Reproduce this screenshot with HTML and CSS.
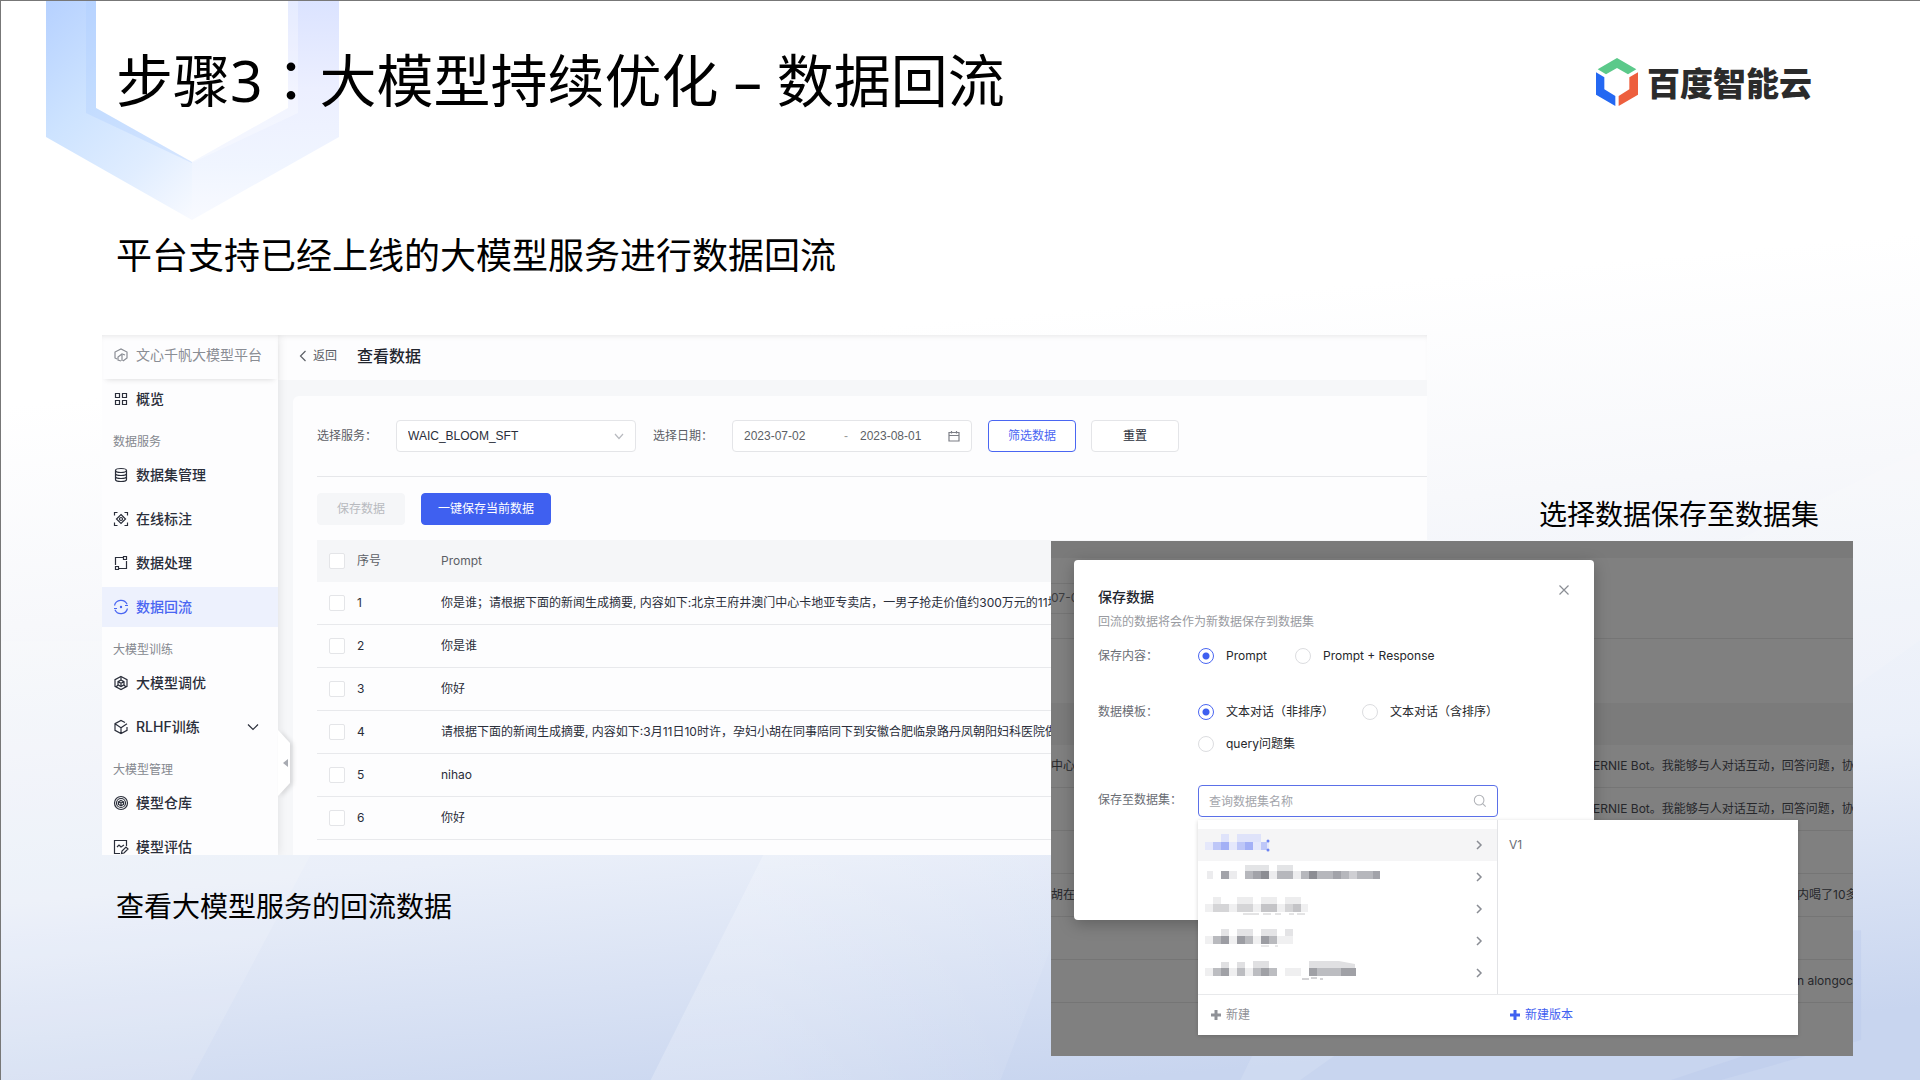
FILE: index.html
```html
<!DOCTYPE html>
<html lang="zh-CN">
<head>
<meta charset="utf-8">
<title>大模型持续优化 – 数据回流</title>
<link rel="stylesheet" href="styles.css">
</head>
<body>
<div class="slide">
  <svg class="backdrop" viewBox="0 0 1920 1080" preserveAspectRatio="none" aria-hidden="true">
    <defs>
      <linearGradient id="sky" x1="0.42" y1="0" x2="0.58" y2="1">
        <stop offset="0.3" stop-color="#fff"/>
        <stop offset="0.5" stop-color="#f7f8fb"/>
        <stop offset="0.75" stop-color="#eaeff9"/>
        <stop offset="1" stop-color="#c8d5ef"/>
      </linearGradient>
      <linearGradient id="ray" x1="0" y1="0" x2="1" y2="0">
        <stop offset="0.2" stop-color="#fff" stop-opacity="0.22"/>
        <stop offset="1" stop-color="#fff" stop-opacity="0"/>
      </linearGradient>
    </defs>
    <rect width="1920" height="1080" fill="url(#sky)"/>
    <path d="M0 640 424 640 190 1080H0Z" fill="#fff" opacity="0.14"/>
    <path d="M860 660 1160 660 1000 1080H650Z" fill="url(#ray)"/>
    <path d="M1430 690 1920 450V640L1300 1080H1240Z" fill="#fff" opacity="0.12"/>
    <path d="M1853 930h8v110l-140 40h-50l180-60Z" fill="#b9c9ea" opacity="0.4"/>
  </svg>
  <svg class="shield" viewBox="0 0 294 220" aria-hidden="true">
    <defs>
      <linearGradient id="shieldLeft" gradientUnits="userSpaceOnUse" x1="0" y1="0" x2="200" y2="200">
        <stop offset="0" stop-color="#b6d1ff"/>
        <stop offset="0.35" stop-color="#cde3ff"/>
        <stop offset="0.65" stop-color="#e0edff"/>
        <stop offset="0.91" stop-color="#f8faff"/>
      </linearGradient>
      <linearGradient id="shieldRight" gradientUnits="userSpaceOnUse" x1="242" y1="0" x2="242" y2="219">
        <stop offset="0" stop-color="#dbe3ff"/>
        <stop offset="0.4" stop-color="#ecefff"/>
        <stop offset="0.75" stop-color="#f0f5ff"/>
        <stop offset="1" stop-color="#f8faff"/>
      </linearGradient>
    </defs>
    <path d="M0 0H50V107L146 161V219L0 136Z" fill="url(#shieldLeft)"/>
    <path d="M242 0H293V136L146 219V161L242 107Z" fill="url(#shieldRight)"/>
    <path d="M40 0H50V107L146 161V162L40 112Z" fill="#a9c9ff" opacity="0.3"/>
    <path d="M242 0H252V112L146 162V161L242 107Z" fill="#fff" opacity="0.3"/>
  </svg>

  <header class="slide-head">
    <h1>步骤3<span class="mid-colon" lang="zh-TW">：</span>大模型持续优化 – 数据回流</h1>
    <div class="logo">
      <svg viewBox="112 82 132 148" width="44" height="50" aria-hidden="true">
        <path d="M178 84 236 118 211 133 178 114 145 133 120 118Z" fill="#5bc98a"/>
        <path d="M115 127 140 142V178L173 198V228L115 194Z" fill="#2468f2"/>
        <path d="M241 127 215 142V178L183 198V228L241 194Z" fill="#ed5f3e"/>
      </svg>
      <span>百度智能云</span>
    </div>
  </header>
  <p class="lead">平台支持已经上线的大模型服务进行数据回流</p>

  <main class="stage">
    <figure class="shot-view">
      <div class="app">
        <nav class="side">
          <div class="brand">
            <svg class="ico" viewBox="0 0 16 16"><path d="M4 12 2 11V5l6-3 6 3v2M8 14l-3-1 0-3 4-3 3 1M10 14l4-3V6M9 8v6"/></svg>
            <span>文心千帆大模型平台</span>
          </div>
          <a class="item" href="#"><svg class="ico" viewBox="0 0 16 16"><path d="M2.500 2.500h4v4h-4zM9.500 2.500h4v4h-4zM2.500 9.500h4v4h-4zM9.500 9.500h4v4h-4z"/></svg>概览</a>
          <div class="group">数据服务</div>
          <a class="item" href="#"><svg class="ico" viewBox="0 0 16 16"><ellipse cx="8" cy="3.500" rx="5.500" ry="2"/><path d="M2.500 3.500v9c0 1.200 2.500 2 5.500 2s5.500-.8 5.500-2v-9M2.500 6.500c0 1.200 2.500 2 5.500 2s5.500-.8 5.500-2M2.500 9.500c0 1.200 2.500 2 5.500 2s5.500-.8 5.500-2"/></svg>数据集管理</a>
          <a class="item" href="#"><svg class="ico" viewBox="0 0 16 16"><path d="M1.500 4.500v-3h3M11.500 1.500h3v3M14.500 11.500v3h-3M4.500 14.500h-3v-3M8 3.500l4.500 4.500L8 12.500 3.500 8z"/><circle cx="8" cy="8" r="1.500"/></svg>在线标注</a>
          <a class="item" href="#"><svg class="ico" viewBox="0 0 16 16"><path d="M2.500 10V2.500H10M13.500 6v7.500H6"/><path d="M10.500 1.500h3v3h-3zM2.500 11.500h3v3h-3z"/></svg>数据处理</a>
          <a class="item active" href="#" aria-current="page"><svg class="ico" viewBox="0 0 16 16"><path d="M1.500 6.500a6.700 6.700 0 0 1 12.600-1.200M14.500 9.500A6.700 6.700 0 0 1 1.900 10.700M1 9.500h3M12 6.500h3"/><circle cx="8" cy="8" r=".6"/></svg>数据回流</a>
          <div class="group">大模型训练</div>
          <a class="item" href="#"><svg class="ico" viewBox="0 0 16 16"><path d="M8 1.500l6 3.200v6.600l-6 3.200-6-3.200V4.700z"/><path d="M8 5l3 1.600v3.200L8 11.500 5 9.800V6.600zM8 8.200V11M5 6.600l3 1.600 3-1.600M8 2v3M3 12l2-2M13 12l-2-2"/></svg>大模型调优</a>
          <a class="item" href="#"><svg class="ico" viewBox="0 0 16 16"><path d="M12 3.500L8 1.500 2 4.700v6.600l6 3.200 6-3.200V8M2 4.700l6 4v5.800M8 8.700l6-4"/></svg>RLHF训练<svg class="ico fold" viewBox="0 0 16 16"><path d="M3 5.500l5 5 5-5"/></svg></a>
          <div class="group">大模型管理</div>
          <a class="item" href="#"><svg class="ico" viewBox="0 0 16 16"><circle cx="8" cy="8" r="6.500"/><circle cx="8" cy="8" r="4.500"/><path d="M8 5.500l2.500 1.300v2.600L8 10.800 5.500 9.400V6.800zM8 8v3M5.500 6.800L8 8l2.500-1.200"/></svg>模型仓库</a>
          <a class="item" href="#"><svg class="ico" viewBox="0 0 16 16"><path d="M13.500 7V1.500h-12v13H7M4 8l2-2 2 2 3-2M8.500 14.500l.5-2.500 4-4 2 2-4 4z"/></svg>模型评估</a>
          <button class="collapse" type="button" aria-label="收起"><svg viewBox="0 0 12 66" width="12" height="66"><path d="M0 0 12 13V53L0 66Z" fill="#fff"/><path d="M10 29v8l-5-4Z" fill="#a8abb2"/></svg></button>
        </nav>
        <section class="work">
          <div class="crumb">
            <a href="#"><svg class="ico" viewBox="0 0 8 12" width="8" height="12"><path d="M6.500 1 1.500 6l5 5"/></svg>返回</a>
            <h2>查看数据</h2>
          </div>
          <div class="card">
            <div class="filters">
              <label for="svc">选择服务：</label>
              <div class="select">
                <select id="svc"><option>WAIC_BLOOM_SFT</option></select>
                <svg class="ico" viewBox="0 0 16 16"><path d="M4 6l4 4.500L12 6"/></svg>
              </div>
              <label for="from">选择日期：</label>
              <div class="range">
                <input id="from" type="text" value="2023-07-02"><span>-</span><input type="text" value="2023-08-01" aria-label="结束日期">
                <svg class="ico" viewBox="0 0 12 12" width="12" height="12"><path d="M1 2.500h10v8.500H1zM1 5.500h10M3.500 1v2.500M8.500 1v2.500"/></svg>
              </div>
              <button class="btn outline" type="button">筛选数据</button>
              <button class="btn plain" type="button">重置</button>
            </div>
            <div class="actions">
              <button class="btn off" type="button" disabled>保存数据</button>
              <button class="btn primary" type="button">一键保存当前数据</button>
            </div>
            <table class="rows">
              <colgroup><col class="c-check"><col class="c-num"><col></colgroup>
              <thead><tr><th><input type="checkbox" aria-label="全选"></th><th>序号</th><th>Prompt</th></tr></thead>
              <tbody>
                <tr><td><input type="checkbox" aria-label="1"></td><td>1</td><td>你是谁；请根据下面的新闻生成摘要, 内容如下:北京王府井澳门中心卡地亚专卖店，一男子抢走价值约300万元的11块</td></tr>
                <tr><td><input type="checkbox" aria-label="2"></td><td>2</td><td>你是谁</td></tr>
                <tr><td><input type="checkbox" aria-label="3"></td><td>3</td><td>你好</td></tr>
                <tr><td><input type="checkbox" aria-label="4"></td><td>4</td><td>请根据下面的新闻生成摘要, 内容如下:3月11日10时许，孕妇小胡在同事陪同下到安徽合肥临泉路丹凤朝阳妇科医院做</td></tr>
                <tr><td><input type="checkbox" aria-label="5"></td><td>5</td><td>nihao</td></tr>
                <tr><td><input type="checkbox" aria-label="6"></td><td>6</td><td>你好</td></tr>
              </tbody>
            </table>
          </div>
        </section>
      </div>
      <figcaption>查看大模型服务的回流数据</figcaption>
    </figure>

    <figure class="shot-save">
      <figcaption>选择数据保存至数据集</figcaption>
      <div class="screen">
        <div class="dim-top"></div>
        <div class="dim-filter"><span>07-0</span></div>
        <div class="dim-gap"></div>
        <table class="dim-rows">
          <colgroup><col class="c-left"><col></colgroup>
          <thead><tr><th></th><th></th></tr></thead>
          <tbody>
            <tr><td>中心</td><td>ERNIE Bot。我能够与人对话互动，回答问题，协</td></tr>
            <tr><td></td><td>ERNIE Bot。我能够与人对话互动，回答问题，协</td></tr>
            <tr><td></td><td></td></tr>
            <tr><td>胡在同</td><td class="tail">内喝了10多</td></tr>
            <tr><td></td><td></td></tr>
            <tr><td></td><td class="tail">n alongoch</td></tr>
          </tbody>
        </table>

        <form class="dialog" role="dialog" aria-labelledby="dlg">
          <button class="close" type="button" aria-label="关闭"><svg class="ico" viewBox="0 0 12 12" width="12" height="12"><path d="M1.500 1.500l9 9M10.500 1.500l-9 9"/></svg></button>
          <h3 id="dlg">保存数据</h3>
          <p>回流的数据将会作为新数据保存到数据集</p>
          <div class="field" role="radiogroup" aria-labelledby="l1">
            <span id="l1">保存内容：</span>
            <div class="opts">
              <label><input type="radio" name="content" checked>Prompt</label>
              <label><input type="radio" name="content">Prompt + Response</label>
            </div>
          </div>
          <div class="field tpl" role="radiogroup" aria-labelledby="l2">
            <span id="l2">数据模板：</span>
            <div class="opts">
              <label><input type="radio" name="tpl" checked>文本对话（非排序）</label>
              <label><input type="radio" name="tpl">文本对话（含排序）</label>
              <label><input type="radio" name="tpl">query问题集</label>
            </div>
          </div>
          <div class="field pick">
            <label for="ds">保存至数据集：</label>
            <div class="combo">
              <input id="ds" type="text" placeholder="查询数据集名称">
              <svg class="ico" viewBox="0 0 16 16"><circle cx="7" cy="7" r="5.500"/><path d="M11 11l3.500 3.500"/></svg>
              <div class="menu">
                <div class="pane">
                  <ul>
                    <li class="on"><svg class="mosaic" viewBox="0 0 180 20"><g fill="#dfe3fa"><path d="M16 1h8v8h-8zM32 1h24v8H32z"/></g><path d="M0 9h64v8H0z" fill="#e5e8fb"/><path d="M8 9h8v8H8zM32 9h8v8h-8zM56 9h6v8h-6z" fill="#bec7f8"/><path d="M16 9h8v8h-8zM40 9h8v8h-8z" fill="#a3b0f6"/><circle cx="63" cy="8" r="1.500" fill="#6c83f2"/><circle cx="63" cy="17" r="1.500" fill="#6c83f2"/></svg><svg class="ico" viewBox="0 0 16 16"><path d="M6 4l4 4-4 4"/></svg></li>
                    <li><svg class="mosaic" viewBox="0 0 180 20"><path d="M40 0h24v6H40zM72 0h16v6H72z" fill="#e3e4e6"/><path d="M2 6h6v8H2zM24 6h8v8h-8zM64 6h8v8h-8zM88 6h8v8h-8z" fill="#ececee"/><path d="M40 6h8v8h-8zM72 6h16v8H72zM96 6h8v8h-8zM112 6h16v8h-16zM136 6h39v8h-39z" fill="#b6b7bc"/><path d="M16 6h8v8h-8zM48 6h8v8h-8zM128 6h8v8h-8zM168 6h7v8h-7z" fill="#a2a3a9"/><path d="M56 6h8v8h-8zM104 6h8v8h-8z" fill="#8c8d93"/><path d="M144 6h8v8h-8z" fill="#cfcfd3"/></svg><svg class="ico" viewBox="0 0 16 16"><path d="M6 4l4 4-4 4"/></svg></li>
                    <li><svg class="mosaic" viewBox="0 0 180 20"><path d="M8 0h8v7H8zM32 0h16v7H32zM56 0h16v7H56zM80 0h16v7H80z" fill="#ededee"/><path d="M0 7h103v8H0z" fill="#f0f0f1"/><path d="M8 7h16v8H8zM32 7h16v8H32zM80 7h8v8h-8z" fill="#d5d5d7"/><path d="M56 7h16v8H56zM88 7h8v8h-8z" fill="#c4c4c7"/><path d="M38 17h16M58 17h8M70 17h6M84 17h5M92 17h8" stroke="#c8c8ca"/></svg><svg class="ico" viewBox="0 0 16 16"><path d="M6 4l4 4-4 4"/></svg></li>
                    <li><svg class="mosaic" viewBox="0 0 180 20"><path d="M16 0h8v7h-8zM32 0h16v7H32zM56 0h16v7H56zM80 0h8v7h-8z" fill="#e4e4e6"/><path d="M0 7h88v8H0z" fill="#f0f0f1"/><path d="M8 7h8v8H8zM40 7h8v8h-8zM64 7h8v8h-8z" fill="#b9babe"/><path d="M16 7h8v8h-8zM32 7h8v8h-8zM56 7h8v8h-8z" fill="#9c9da3"/><path d="M56 17h8M70 17h3" stroke="#d0d0d2"/></svg><svg class="ico" viewBox="0 0 16 16"><path d="M6 4l4 4-4 4"/></svg></li>
                    <li><svg class="mosaic" viewBox="0 0 180 20"><path d="M16 1h8v6h-8zM32 1h8v6h-8zM48 0h16v7H48zM104 0h30l16 3v4h-46z" fill="#e0e0e2"/><path d="M0 7h72v8H0zM80 7h16v8H80z" fill="#efeff0"/><path d="M8 7h8v8H8zM32 7h8v8h-8zM48 7h8v8h-8zM64 7h8v8h-8zM104 7h47v8h-47z" fill="#bcbdc1"/><path d="M16 7h8v8h-8zM56 7h8v8h-8zM104 7h8v8h-8zM136 7h15v8h-15z" fill="#a0a1a6"/><path d="M97 18h7M106 17h6M115 18h3" stroke="#a8a8ac"/></svg><svg class="ico" viewBox="0 0 16 16"><path d="M6 4l4 4-4 4"/></svg></li>
                  </ul>
                  <button class="add" type="button"><svg viewBox="0 0 10 10" width="10" height="10"><path d="M5 0v10M0 5h10"/></svg>新建</button>
                </div>
                <div class="pane">
                  <ul><li class="ver">V1</li></ul>
                  <button class="add blue" type="button"><svg viewBox="0 0 10 10" width="10" height="10"><path d="M5 0v10M0 5h10"/></svg>新建版本</button>
                </div>
              </div>
            </div>
          </div>
        </form>
      </div>
    </figure>
  </main>
</div>
</body>
</html>
```

FILE: styles.css
```css
* { box-sizing: border-box; }

body {
  margin: 0;
  color: #000;
  font-family: "Noto Sans", "Noto Sans CJK SC", sans-serif;
}

h1, h2, h3, p, ul, figure { margin: 0; padding: 0; }
ul { list-style: none; }
a { color: inherit; text-decoration: none; }
button, input, select { font: inherit; color: inherit; margin: 0; }
button { padding: 0; border: 0; background: none; }

.slide {
  position: relative;
  min-height: 100vh;
  border-top: 1px solid #777;
  border-left: 1px solid #777;
  overflow: hidden;
}
.backdrop { position: absolute; inset: 0; width: 100%; height: 100%; z-index: -2; }
.shield { position: absolute; left: 45px; top: 0; width: 294px; z-index: -1; }

.slide-head {
  display: flex;
  justify-content: space-between;
  padding: 40px 108px 0 115px;
}
h1 { font-size: 57px; line-height: 72px; font-weight: 400; }
.mid-colon { font-family: "Noto Sans CJK TC", sans-serif; }
.logo {
  display: flex;
  align-items: center;
  gap: 8px;
  height: 82px;
  color: #2b2b2b;
  font: 900 33px/48px "Noto Sans CJK SC", sans-serif;
}
.lead { margin-top: 109px; padding-left: 115px; font-size: 36px; line-height: 48px; }

.stage {
  display: grid;
  grid-template-columns: 949fr 376fr 426fr;
  align-items: start;
  margin-top: 55px;
  padding: 0 67px 24px 101px;
}
.shot-view { grid-area: 1 / 1 / 2 / 3; }
.shot-save { grid-area: 1 / 2 / 2 / 4; margin-top: 159px; }
figcaption { font-size: 28px; line-height: 40px; }
.shot-view figcaption { margin-top: 31px; padding-left: 14px; }
.shot-save figcaption { margin-bottom: 7px; padding-right: 34px; text-align: right; }

.ico {
  flex: none;
  width: 16px;
  height: 16px;
  fill: none;
  stroke: currentColor;
  stroke-width: 1.2;
}
.ico[width="12"] { width: 12px; height: 12px; }
.ico[width="8"] { width: 8px; height: 12px; }

/* data view */
.app {
  display: flex;
  height: 520px;
  overflow: hidden;
  background: #f6f7f9;
  color: #2a2e3a;
  font: 12px/20px Inter, "Noto Sans CJK SC", sans-serif;
}
.side {
  position: relative;
  flex: none;
  width: 176px;
  background: #fdfdfe;
  box-shadow: 0 0 10px rgba(0, 0, 0, .1);
  z-index: 1;
  font-size: 14px;
}
.brand {
  display: flex;
  align-items: center;
  gap: 7px;
  height: 44px;
  padding: 0 11px 4px;
  color: #8a8d94;
  box-shadow: 0 4px 6px -4px rgba(0, 0, 0, .16), inset 0 4px 6px -4px rgba(0, 0, 0, .12);
}
.item {
  display: flex;
  align-items: center;
  gap: 7px;
  height: 40px;
  padding: 0 17px 0 11px;
  font-weight: 500;
}
.item + .item { margin-top: 4px; }
.item .fold { margin-left: auto; }
.active { background: #edf1fd; color: #4a66f2; }
.group { height: 36px; padding: 8px 11px 0; font-size: 12px; line-height: 30px; color: #85888f; }
.collapse { position: absolute; left: 100%; top: 395px; height: 66px; filter: drop-shadow(3px 1px 2px rgba(0, 0, 0, .12)); }
.collapse svg { display: block; }

.work { flex: 1; min-width: 0; }
.crumb {
  display: flex;
  align-items: center;
  gap: 20px;
  height: 45px;
  padding: 0 21px 3px;
  background: #fdfdfe;
  box-shadow: inset 0 4px 6px -4px rgba(0, 0, 0, .12);
}
.crumb a { display: flex; align-items: center; gap: 6px; color: #5c5f66; }
h2 { font-size: 16px; font-weight: 500; color: #22252e; }
.card {
  margin: 16px 0 0 15px;
  padding: 24px 0 16px 24px;
  border-radius: 6px 0 0 0;
  background: #fdfdfe;
}
.filters {
  display: flex;
  align-items: center;
  height: 57px;
  padding-bottom: 24px;
  border-bottom: 1px solid #e6e7ea;
  color: #5c5f66;
}
.filters > label { width: 79px; }
.select, .range {
  display: flex;
  align-items: center;
  width: 240px;
  height: 32px;
  border: 1px solid #e4e5e8;
  border-radius: 4px;
  background: #fff;
  font-family: "Liberation Sans", sans-serif;
}
.select { position: relative; margin-right: 17px; color: #2a2e3a; }
.select select { appearance: none; width: 100%; height: 30px; padding: 0 11px; border: 0; background: none; }
.select .ico { position: absolute; right: 8px; color: #b8babf; pointer-events: none; }
.range { margin-right: 16px; padding: 0 11px; }
.range input { width: 84px; padding: 0; border: 0; background: none; }
.range span { width: 32px; padding-left: 16px; color: #999; }
.range .ico { margin-left: auto; color: #7c7f86; }
.btn { width: 88px; height: 32px; border: 1px solid #e4e5e8; border-radius: 4px; background: #fff; }
.outline { margin-right: 15px; border-color: #4a66f2; color: #4a66f2; }
.plain { color: #2a2e3a; }
.actions { display: flex; gap: 16px; margin: 16px 0 15px; }
.off { border-color: #f5f6f8; background: #f5f6f8; color: #b8babf; }
.primary { width: 130px; border-color: #3f60f0; background: #3f60f0; color: #fff; }

.rows, .dim-rows { width: 100%; table-layout: fixed; border-spacing: 0; }
.c-check { width: 40px; }
.c-num { width: 84px; }
.rows th, .rows td, .dim-rows th, .dim-rows td {
  padding: 0;
  text-align: left;
  font-weight: 400;
  white-space: nowrap;
  overflow: hidden;
}
.rows th { height: 42px; background: #f5f6f8; color: #5c5f66; }
.rows td { height: 43px; border-bottom: 1px solid #e8e9ec; }
.rows input {
  appearance: none;
  display: block;
  width: 16px;
  height: 16px;
  margin-left: 12px;
  border: 1px solid #e4e5e8;
  border-radius: 2px;
  background: #fff;
}

/* save dialog */
.screen {
  position: relative;
  height: 515px;
  background: #808080;
  color: #26272b;
  font: 12px/20px Inter, "Noto Sans CJK SC", sans-serif;
}
.dim-top { height: 17px; background: #7a7a7a; }
.dim-filter { height: 81px; padding-top: 25px; border-bottom: 1px solid #757575; }
.dim-filter span {
  display: block;
  width: 120px;
  height: 31px;
  border: solid #757575;
  border-width: 1px 0;
  line-height: 28px;
  color: #3c3c3f;
}
.dim-gap { height: 64px; }
.c-left { width: 542px; }
.dim-rows th { height: 42px; background: #7b7b7b; }
.dim-rows td { height: 43px; border-bottom: 1px solid #757575; }
.dim-rows .tail { padding-left: 204px; }

.dialog {
  position: absolute;
  left: 23px;
  top: 19px;
  width: 520px;
  min-height: 360px;
  padding: 24px;
  border-radius: 4px;
  background: #fff;
  box-shadow: 0 4px 16px rgba(0, 0, 0, .25);
}
.close { position: absolute; right: 24px; top: 24px; width: 12px; height: 12px; color: #8a8d94; }
.close svg { display: block; }
h3 { font-size: 14px; line-height: 26px; font-weight: 500; color: #22252e; }
.dialog p { line-height: 24px; color: #999ba1; }
.field { display: flex; margin-top: 10px; line-height: 24px; }
.field > :first-child { flex: none; width: 100px; color: #6a6d74; }
.tpl { margin-top: 32px; }
.pick { margin-top: 29px; }
.pick > label { line-height: 30px; }
.opts { display: flex; flex-wrap: wrap; gap: 8px 28px; }
.opts label { display: flex; align-items: center; gap: 12px; }
.opts input {
  appearance: none;
  width: 16px;
  height: 16px;
  border: 1px solid #dcdde0;
  border-radius: 50%;
  background: #fff;
}
.opts input:checked { border-color: #4a66f2; background: radial-gradient(circle, #3f60f0 0 3px, #fff 4px); }

.combo { position: relative; width: 300px; height: 32px; }
.combo input {
  width: 100%;
  height: 32px;
  padding: 0 10px;
  border: 1px solid #5b70e8;
  border-radius: 4px;
  background: #fff;
}
.combo input::placeholder { color: #a3a5ab; opacity: 1; }
.combo > .ico { position: absolute; right: 11px; top: 9px; width: 14px; height: 14px; color: #b0b2b7; }
.menu {
  position: absolute;
  left: 0;
  top: 35px;
  display: grid;
  grid-template-columns: 299fr 301fr;
  width: 600px;
  background: #fff;
  box-shadow: 0 1px 4px rgba(0, 0, 0, .18);
}
.pane ul { height: 174px; padding-top: 9px; }
.pane + .pane ul { border-left: 1px solid #e2e3e6; }
.pane li { display: flex; align-items: center; justify-content: space-between; height: 32px; padding: 0 10px 0 7px; color: #6a6d74; }
.pane li .ico { color: #8a8d94; stroke-width: 1.5; }
.pane .on { background: #f5f5f6; }
.pane .ver { padding: 0 11px; }
.pane .mosaic { width: 180px; height: 20px; margin-bottom: 4px; }
.add {
  display: flex;
  align-items: center;
  gap: 5px;
  width: 100%;
  height: 41px;
  padding: 0 13px;
  border-top: 1px solid #e8e9eb;
  color: #8f9197;
}
.add svg { stroke: currentColor; stroke-width: 3; }
.blue { color: #3f60f0; }
```
